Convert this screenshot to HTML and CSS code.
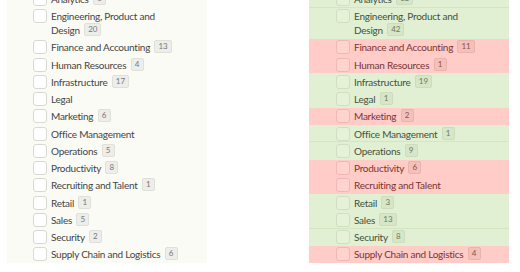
FILE: index.html
```html
<!DOCTYPE html>
<html lang="en">
<head>
    <meta charset="UTF-8">
    <meta name="viewport" content="width=device-width, initial-scale=1.0">
    <title>Department filter diff</title>
    <link rel="stylesheet" href="styles.css">
</head>
<body>
    <div class="board">
        <!-- before -->
        <ul class="panel panel-before">
            <li class="item"><span class="box"></span><span class="label">Analytics <span class="count">6</span></span></li>
            <li class="item"><span class="box"></span><span class="label">Engineering, Product and Design <span class="count">20</span></span></li>
            <li class="item"><span class="box"></span><span class="label">Finance and Accounting <span class="count">13</span></span></li>
            <li class="item"><span class="box"></span><span class="label">Human Resources <span class="count">4</span></span></li>
            <li class="item"><span class="box"></span><span class="label">Infrastructure <span class="count">17</span></span></li>
            <li class="item"><span class="box"></span><span class="label">Legal</span></li>
            <li class="item"><span class="box"></span><span class="label">Marketing <span class="count">6</span></span></li>
            <li class="item"><span class="box"></span><span class="label">Office Management</span></li>
            <li class="item"><span class="box"></span><span class="label">Operations <span class="count">5</span></span></li>
            <li class="item"><span class="box"></span><span class="label">Productivity <span class="count">8</span></span></li>
            <li class="item"><span class="box"></span><span class="label">Recruiting and Talent <span class="count">1</span></span></li>
            <li class="item"><span class="box"></span><span class="label">Retail <span class="count">1</span></span></li>
            <li class="item"><span class="box"></span><span class="label">Sales <span class="count">5</span></span></li>
            <li class="item"><span class="box"></span><span class="label">Security <span class="count">2</span></span></li>
            <li class="item"><span class="box"></span><span class="label">Supply Chain and Logistics <span class="count">6</span></span></li>
        </ul>
        <!-- after -->
        <ul class="panel panel-after">
            <li class="item up split"><span class="box"></span><span class="label">Analytics <span class="count">13</span></span></li>
            <li class="item up"><span class="box"></span><span class="label">Engineering, Product and Design <span class="count">42</span></span></li>
            <li class="item down"><span class="box"></span><span class="label">Finance and Accounting <span class="count">11</span></span></li>
            <li class="item down"><span class="box"></span><span class="label">Human Resources <span class="count">1</span></span></li>
            <li class="item up"><span class="box"></span><span class="label">Infrastructure <span class="count">19</span></span></li>
            <li class="item up"><span class="box"></span><span class="label">Legal <span class="count">1</span></span></li>
            <li class="item down"><span class="box"></span><span class="label">Marketing <span class="count">2</span></span></li>
            <li class="item up split"><span class="box"></span><span class="label">Office Management <span class="count">1</span></span></li>
            <li class="item up"><span class="box"></span><span class="label">Operations <span class="count">9</span></span></li>
            <li class="item down"><span class="box"></span><span class="label">Productivity <span class="count">6</span></span></li>
            <li class="item down"><span class="box"></span><span class="label">Recruiting and Talent</span></li>
            <li class="item up"><span class="box"></span><span class="label">Retail <span class="count">3</span></span></li>
            <li class="item up split"><span class="box"></span><span class="label">Sales <span class="count">13</span></span></li>
            <li class="item up"><span class="box"></span><span class="label">Security <span class="count">8</span></span></li>
            <li class="item down"><span class="box"></span><span class="label">Supply Chain and Logistics <span class="count">4</span></span></li>
        </ul>
    </div>
</body>
</html>
```

FILE: styles.css
```css
body {
    margin: 0;
    background-color: #fff;
    font-family: 'Lato', 'Open Sans', sans-serif;
    color: #444;
    overflow: hidden;
}

.board {
    display: flex;
    gap: 102px;
    padding: 0 7px;
    margin-top: -9.75px; /* list is scrolled, Analytics is cut off */
}

.panel {
    list-style: none;
    margin: 0;
    padding: 0;
    width: 200px;
}

.panel-before {
    background-color: #fbfbf6;
}

.item {
    display: flex;
    align-items: flex-start;
    padding: 1.625px 0 1.625px 26px;
    font-size: 10px;
    letter-spacing: -0.25px;
    line-height: 14px;
}

.box {
    flex: none;
    width: 12px;
    height: 12px;
    border: 1px solid #d9d9d3;
    border-radius: 3px;
    background-color: #fff;
    margin-right: 4px;
}

.label {
    max-width: 128px;
}

.count {
    display: inline-block;
    margin-left: 2px;
    padding: 0 3px;
    min-width: 5px;
    height: 11px;
    line-height: 11px;
    font-size: 8px;
    letter-spacing: 0;
    text-align: center;
    color: #777;
    background-color: #ededea;
    border: 1px solid #e0e0da;
    border-radius: 2px;
    vertical-align: top;
}

/* after panel: green = up, red = down */
.panel-after .item {
    padding-left: 27px;
}

.item.up {
    background-color: #e1efd3;
    color: #445140;
}

.item.down {
    background-color: #ffccc7;
    color: #7a3533;
}

.item.split {
    box-shadow: inset 0 -1px 0 #d2e6c0;
}

.item.up .box {
    background-color: #e5f2d8;
    border-color: #cfdfc0;
}

.item.down .box {
    background-color: #ffd3ce;
    border-color: #f1b7b0;
}

.item.up .count {
    color: #6c7a66;
    background-color: #d6e6c6;
    border-color: #ccdcbc;
}

.item.down .count {
    color: #8a5250;
    background-color: #f4c0ba;
    border-color: #eab3ad;
}
```
